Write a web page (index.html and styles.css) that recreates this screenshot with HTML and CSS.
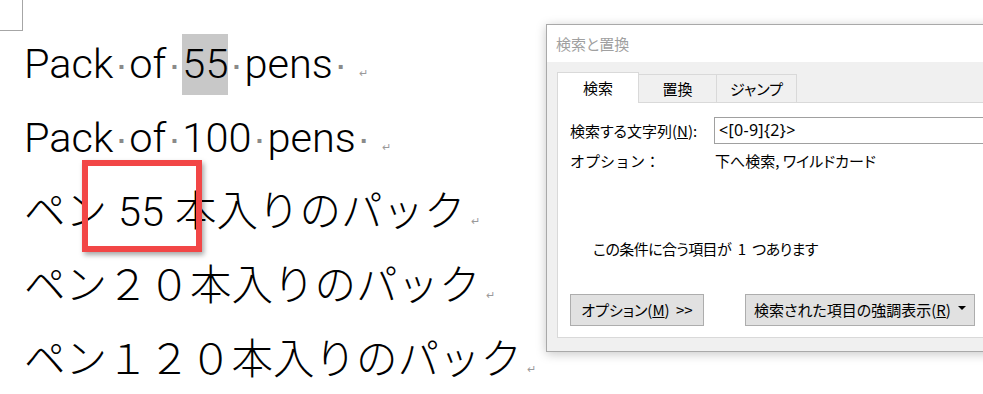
FILE: index.html
```html
<!DOCTYPE html>
<html lang="ja">
<head>
<meta charset="utf-8">
<link rel="stylesheet" href="styles.css">
</head>
<body>
<div class="page">
  <div class="crop"></div>
  <div class="doc">
    <p class="ln">Pack<span class="sp">·</span>of<span class="sp">·</span><span class="hl">55</span><span class="sp">·</span>pens<span class="sp">·</span><span class="pm pm-sp">↵</span></p>
    <p class="ln">Pack<span class="sp">·</span>of<span class="sp">·</span>100<span class="sp">·</span>pens<span class="sp">·</span><span class="pm pm-sp">↵</span></p>
    <p class="ln">ペン<span class="hs"> </span>55<span class="hs"> </span>本入りのパック<span class="pm">↵</span></p>
    <p class="ln">ペン２０本入りのパック<span class="pm">↵</span></p>
    <p class="ln">ペン１２０本入りのパック<span class="pm">↵</span></p>
  </div>
  <div class="redbox"></div>

  <div class="dialog">
    <div class="titlebar">検索と置換</div>
    <div class="dbody">
      <div class="tabs">
        <div class="tab active">検索</div>
        <div class="tab">置換</div>
        <div class="tab">ジャンプ</div>
      </div>
      <div class="panel">
        <div class="row find">
          <span class="label">検索する文字列(<u>N</u>):</span>
          <div class="input">&lt;[0-9]{2}&gt;</div>
        </div>
        <div class="row opts">
          <span class="label">オプション：</span>
          <span class="optval">下へ検索, ワイルドカード</span>
        </div>
        <div class="msg">この条件に合う項目が 1 つあります</div>
        <div class="buttons">
          <div class="btn btn-opt">オプション(<u>M</u>) &gt;&gt;</div>
          <div class="btn btn-hl">検索された項目の強調表示(<u>R</u>)<span class="caret"></span></div>
        </div>
      </div>
    </div>
  </div>
</div>
</body>
</html>
```

FILE: styles.css
```css
html, body {
  margin: 0;
  padding: 0;
  background: #ffffff;
  overflow: hidden;
}

.page {
  position: relative;
  width: 983px;
  height: 394px;
  overflow: hidden;
}

.crop {
  position: absolute;
  left: 0;
  top: 0;
  width: 22px;
  height: 30px;
  border-right: 1px solid #a6a6a6;
  border-bottom: 1px solid #a6a6a6;
}

.doc {
  padding: 27px 0 0 24px;
  font-family: Roboto, "Noto Sans CJK JP", sans-serif;
  font-weight: 300;
  font-size: 41.5px;
  color: #000;
}

.ln {
  margin: 0;
  line-height: 74px;
  height: 74px;
  white-space: nowrap;
}

.sp {
  display: inline-block;
  width: 16px;
  text-align: center;
  color: #8a8a8a;
  font-family: "DejaVu Sans", sans-serif;
  font-weight: bold;
  font-size: 22px;
  vertical-align: 4px;
  line-height: 1;
}

.hs {
  display: inline-block;
  width: 11px;
}

.hl {
  background: #c8c8c8;
  padding: 5px 0 7px;
}

.pm {
  font-family: "DejaVu Sans", sans-serif;
  font-size: 11px;
  color: #9a9a9a;
  margin-left: 5px;
  vertical-align: 1px;
}

.pm-sp {
  margin-left: 10px;
}

.redbox {
  position: absolute;
  left: 82px;
  top: 160px;
  width: 120px;
  height: 92px;
  box-sizing: border-box;
  border: 6px solid #f24646;
  box-shadow: 2px 3px 5px rgba(0, 0, 0, 0.35);
}

/* dialog */
.dialog {
  position: absolute;
  left: 546px;
  top: 24px;
  width: 470px;
  border: 1px solid #a9a9a9;
  box-shadow: 0 2px 10px rgba(0, 0, 0, 0.22);
  background: #f0f0f0;
  font-family: "Noto Sans CJK JP", "Noto Sans", sans-serif;
  font-size: 15px;
  font-feature-settings: "palt";
  color: #000;
}

.titlebar {
  height: 37px;
  background: #ffffff;
  color: #a0a0a0;
  font-size: 15px;
  line-height: 38px;
  padding-left: 9px;
}

.dbody {
  padding: 10px 0 13px 10px;
}

.tabs {
  display: flex;
  align-items: flex-end;
  height: 30px;
  position: relative;
  z-index: 1;
}

.tab {
  box-sizing: border-box;
  height: 28px;
  border: 1px solid #d9d9d9;
  border-bottom: none;
  border-left: none;
  background: #f0f0f0;
  text-align: center;
  line-height: 27px;
  font-size: 15px;
}

.tab:nth-child(2) { width: 78px; }
.tab:nth-child(3) { width: 80px; }

.tab.active {
  width: 82px;
  height: 31px;
  margin-bottom: -1px;
  background: #ffffff;
  border-left: 1px solid #d9d9d9;
  line-height: 29px;
}

.panel {
  background: #ffffff;
  border: 1px solid #d9d9d9;
  border-right: none;
  padding: 14px 0 0 12px;
  box-sizing: border-box;
  height: 236px;
  display: flex;
  flex-direction: column;
}

.row {
  display: flex;
  align-items: center;
}

.label {
  width: 144px;
  flex: none;
}

.input {
  flex: 1;
  height: 27px;
  box-sizing: border-box;
  border: 1px solid #a0a0a0;
  border-right: none;
  padding-left: 4px;
  line-height: 25px;
  font-family: "Noto Sans", sans-serif;
  font-size: 16px;
  letter-spacing: 0.3px;
}

.opts {
  margin-top: 4px;
  height: 24px;
}

.opts .label {
  font-feature-settings: normal;
}

.optval {
  margin-left: 1px;
}

.msg {
  margin: 66px 0 0 23px;
  height: 22px;
  line-height: 22px;
  letter-spacing: -0.6px;
  word-spacing: 4px;
}

.buttons {
  display: flex;
  margin-top: 34px;
  gap: 41px;
}

.btn {
  box-sizing: border-box;
  height: 32px;
  border: 1px solid #adadad;
  background: #e1e1e1;
  line-height: 30px;
  display: flex;
  align-items: center;
  justify-content: center;
}

.btn-opt {
  width: 134px;
  word-spacing: 3px;
}

.btn-hl {
  width: 230px;
}

.caret {
  display: inline-block;
  width: 0;
  height: 0;
  margin-left: 7px;
  border-left: 4px solid transparent;
  border-right: 4px solid transparent;
  border-top: 4px solid #000;
  position: relative;
  top: -2px;
}
```
